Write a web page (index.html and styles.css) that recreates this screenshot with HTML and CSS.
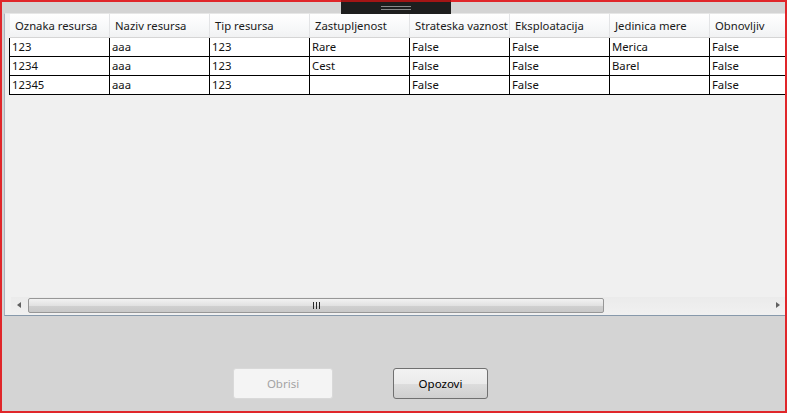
FILE: index.html
```html
<!DOCTYPE html>
<html>
<head>
<meta charset="utf-8">
<link rel="stylesheet" href="styles.css">
</head>
<body>
<div class="window">
  <div class="tab"><span class="grip"></span></div>
  <div class="grid">
    <div class="table">
      <div class="row head">
        <div class="hcell">Oznaka resursa</div>
        <div class="hcell">Naziv resursa</div>
        <div class="hcell">Tip resursa</div>
        <div class="hcell">Zastupljenost</div>
        <div class="hcell">Strateska vaznost</div>
        <div class="hcell">Eksploatacija</div>
        <div class="hcell">Jedinica mere</div>
        <div class="hcell">Obnovljiv</div>
      </div>
      <div class="row data">
        <div class="cell">123</div><div class="cell">aaa</div><div class="cell">123</div><div class="cell">Rare</div><div class="cell">False</div><div class="cell">False</div><div class="cell">Merica</div><div class="cell">False</div>
      </div>
      <div class="row data">
        <div class="cell">1234</div><div class="cell">aaa</div><div class="cell">123</div><div class="cell">Cest</div><div class="cell">False</div><div class="cell">False</div><div class="cell">Barel</div><div class="cell">False</div>
      </div>
      <div class="row data">
        <div class="cell">12345</div><div class="cell">aaa</div><div class="cell">123</div><div class="cell"></div><div class="cell">False</div><div class="cell">False</div><div class="cell"></div><div class="cell">False</div>
      </div>
    </div>
    <div class="hscroll">
      <span class="arrow left"></span>
      <div class="track">
        <div class="thumb"><span class="thumb-grip"></span></div>
      </div>
      <span class="arrow right"></span>
    </div>
  </div>
  <div class="buttons">
    <button class="btn disabled">Obrisi</button>
    <button class="btn">Opozovi</button>
  </div>
</div>
</body>
</html>
```
FILE: styles.css
```css
* { box-sizing: border-box; }
html, body { margin: 0; padding: 0; }
body {
  width: 787px;
  height: 413px;
  overflow: hidden;
  font-family: "Segoe UI", "Noto Sans", "Open Sans", sans-serif;
  font-size: 11.3px;
  color: #000;
}
.window {
  position: relative;
  width: 787px;
  height: 413px;
  background: #d4d4d4;
  border-top: 2px solid #e0262a;
  border-left: 2px solid #e0262a;
  border-right: 2px solid #e0262a;
  border-bottom: 2px solid #e0262a;
  display: flex;
  flex-direction: column;
}
.tab {
  position: absolute;
  left: 339px;
  top: -2px;
  width: 110px;
  height: 14px;
  background: #1e1e1e;
  border-top: 2px solid #a31515;
  display: flex;
  justify-content: center;
  align-items: center;
}
.grip {
  width: 30px;
  height: 4px;
  border-top: 1px solid #8a8a8a;
  border-bottom: 1px solid #8a8a8a;
}
.grid {
  margin: 11px 0 0 2px;
  height: 303px;
  background: #f0f0f0;
  border-left: 1px solid #a9b3bf;
  border-top: 1px solid #e6e6e6;
  border-bottom: 1px solid #8799ab;
  display: flex;
  flex-direction: column;
  padding-left: 4px;
  overflow: hidden;
}
.table {
  flex: 1;
  display: flex;
  flex-direction: column;
}
.row {
  display: flex;
  flex-shrink: 0;
}
.head {
  height: 24px;
  background: linear-gradient(#ffffff, #f7f8f9 60%, #f1f2f3);
  border-bottom: 1px solid #d5d5d5;
  margin-left: 1px;
}
.hcell {
  width: 100px;
  flex-shrink: 0;
  padding-left: 5px;
  line-height: 23px;
  border-right: 1px solid #e3e4e6;
  white-space: nowrap;
  overflow: hidden;
  color: #1a1a1a;
}
.data {
  height: 19px;
  background: #fff;
  border-bottom: 1px solid #000;
  border-left: 1px solid #000;
}
.cell {
  width: 100px;
  flex-shrink: 0;
  padding-left: 2px;
  line-height: 18px;
  border-right: 1px solid #000;
  white-space: nowrap;
  overflow: hidden;
  color: #111;
}
.hscroll {
  height: 17px;
  margin-left: 2px;
  margin-bottom: 1px;
  background: linear-gradient(#ebebeb, #f0f0f0);
  display: flex;
  align-items: center;
}
.arrow {
  width: 17px;
  height: 17px;
  position: relative;
  flex-shrink: 0;
}
.arrow.left::after {
  content: "";
  position: absolute;
  left: 6px;
  top: 5px;
  border-right: 4px solid #606060;
  border-top: 3px solid transparent;
  border-bottom: 3px solid transparent;
}
.arrow.right::after {
  content: "";
  position: absolute;
  left: 8px;
  top: 5px;
  border-left: 4px solid #606060;
  border-top: 3px solid transparent;
  border-bottom: 3px solid transparent;
}
.track {
  flex: 1;
  height: 15px;
}
.thumb {
  width: 576px;
  height: 15px;
  border: 1px solid #979797;
  border-radius: 2px;
  background: linear-gradient(#f2f2f2, #e2e2e2 50%, #d0d0d0 55%, #c8c8c8);
  display: flex;
  justify-content: center;
  align-items: center;
}
.thumb-grip {
  width: 7px;
  height: 7px;
  background: repeating-linear-gradient(90deg, #2a2a2a 0 1px, transparent 1px 3px);
  margin-left: 1px;
}
.buttons {
  flex: 1;
  display: flex;
  align-items: flex-end;
  padding: 0 0 12px 231px;
  gap: 60px;
}
.btn {
  font-family: "Segoe UI", "Noto Sans", "Open Sans", sans-serif;
  font-size: 11.5px;
  height: 31px;
  width: 95px;
  border: 1px solid #707070;
  border-radius: 3px;
  background: linear-gradient(#f2f2f2, #ebebeb 50%, #dddddd 51%, #cfcfcf);
  color: #000;
  padding: 0;
}
.btn.disabled {
  width: 100px;
  border-color: #d9d9d9;
  background: #f4f4f4;
  color: #a3a3a3;
}
```
